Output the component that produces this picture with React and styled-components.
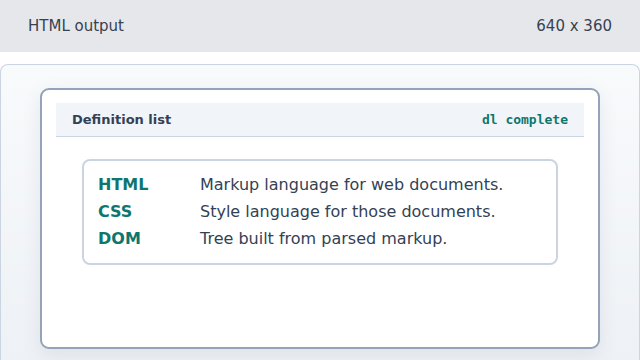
import React from 'react';
import styled, { createGlobalStyle } from 'styled-components';

const GlobalStyle = createGlobalStyle`
  html, body {
    margin: 0;
    padding: 0;
    background: #ffffff;
    font-family: "DejaVu Sans", "Noto Sans", sans-serif;
  }
`

const Page = styled.div`
  width: 640px;
  height: 360px;
  overflow: hidden;
  display: flex;
  flex-direction: column;
  background: #ffffff;
`

const TopBar = styled.div`
  height: 52px;
  flex-shrink: 0;
  display: flex;
  align-items: center;
  justify-content: space-between;
  padding: 0 28px;
  box-sizing: border-box;
  background: #e5e7eb;
  color: #374151;
  font-size: 15px;
`

const Stage = styled.div`
  margin-top: 12px;
  flex: 1;
  border: 1px solid #cbd5e1;
  border-bottom: none;
  border-radius: 8px 8px 0 0;
  background: linear-gradient(180deg, #f8fafc 0%, #eef1f5 100%);
  padding: 23px 39px 0;
`

const Card = styled.div`
  height: 261px;
  box-sizing: border-box;
  background: #ffffff;
  border: 2px solid #94a3b8;
  border-radius: 9px;
  padding: 13px 14px;
  box-shadow: 0 6px 18px rgba(100, 116, 139, 0.12);
`

const CardHeader = styled.div`
  height: 34px;
  box-sizing: border-box;
  display: flex;
  align-items: center;
  justify-content: space-between;
  padding: 0 16px;
  background: #f1f5f9;
  border-bottom: 1px solid #cbd5e1;
`

const Title = styled.span`
  font-size: 13px;
  font-weight: bold;
  color: #334155;
`

const Tag = styled.code`
  font-family: "DejaVu Sans Mono", "Liberation Mono", monospace;
  font-size: 13px;
  font-weight: bold;
  color: #0f766e;
`

const List = styled.dl`
  margin: 22px 26px 0 26px;
  padding: 10px 14px 11px;
  border: 2px solid #cbd5e1;
  border-radius: 8px;
  display: grid;
  grid-template-columns: 102px 1fr;
  grid-auto-rows: 27px;
  align-items: center;
`

const Term = styled.dt`
  font-size: 16px;
  font-weight: bold;
  color: #0f766e;
`

const Desc = styled.dd`
  margin: 0;
  font-size: 16px;
  color: #334155;
`

const items = [
  ['HTML', 'Markup language for web documents.'],
  ['CSS', 'Style language for those documents.'],
  ['DOM', 'Tree built from parsed markup.'],
]

export default function App() {
  return (
    <Page>
      <GlobalStyle />
      <TopBar>
        <span>HTML output</span>
        <span>640 x 360</span>
      </TopBar>
      <Stage>
        <Card>
          <CardHeader>
            <Title>Definition list</Title>
            <Tag>dl complete</Tag>
          </CardHeader>
          <List>
            {items.map(([term, desc]) => (
              <React.Fragment key={term}>
                <Term>{term}</Term>
                <Desc>{desc}</Desc>
              </React.Fragment>
            ))}
          </List>
        </Card>
      </Stage>
    </Page>
  );
}
